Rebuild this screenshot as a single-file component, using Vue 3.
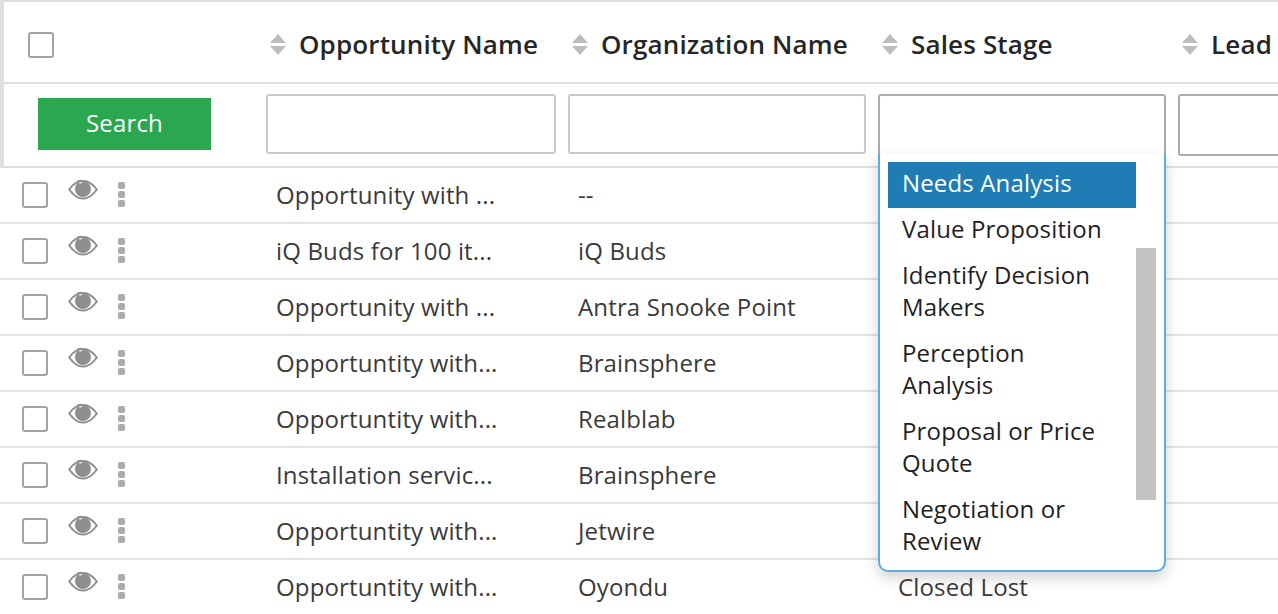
<template>
  <div class="page">
    <div class="head-block">
      <div class="row header-row">
        <div class="select-cell">
          <span class="checkbox"></span>
        </div>
        <div class="head-cell" v-for="col in columns" :key="col">
          <svg class="sort-icon" viewBox="0 0 16 21" width="16" height="21">
            <path d="M8 0 L16 9 H0 Z" />
            <path d="M0 12 H16 L8 21 Z" />
          </svg>
          <span class="head-label">{{ col }}</span>
        </div>
      </div>
      <div class="row filter-row">
        <div class="search-cell">
          <button class="search-btn">Search</button>
        </div>
        <div class="filter-cell"><div class="filter-input"></div></div>
        <div class="filter-cell"><div class="filter-input"></div></div>
        <div class="filter-cell stage-cell">
          <div class="filter-input active"></div>
          <div class="stage-menu">
            <div
              v-for="(opt, i) in stages"
              :key="opt"
              class="stage-option"
              :class="{ selected: i === 0 }"
            >{{ opt }}</div>
            <div class="menu-thumb"></div>
          </div>
        </div>
        <div class="filter-cell"><div class="filter-input tall"></div></div>
      </div>
    </div>
    <div class="row body-row" v-for="item in items" :key="item.name + item.org">
      <div class="action-cell">
        <span class="checkbox small"></span>
        <svg class="eye-icon" viewBox="0 0 30 20" width="30" height="20">
          <path class="eye-outline" d="M1.2 9.5 C5.5 3.4 10 1 15 1 C20 1 24.5 3.4 28.8 9.5 C24.5 15.6 20 18.6 15 18.6 C10 18.6 5.5 15.6 1.2 9.5 Z" />
          <path class="eye-iris" fill-rule="evenodd" d="M15 1 A8 8 0 1 1 14.99 1 Z M12.2 3.6 A2.6 2.6 0 1 0 12.19 3.6 Z" />
        </svg>
        <span class="dots"><i></i><i></i><i></i></span>
      </div>
      <div class="cell">{{ item.name }}</div>
      <div class="cell">{{ item.org }}</div>
      <div class="cell stage-text">{{ item.stage }}</div>
      <div class="cell"></div>
    </div>
  </div>
</template>

<script setup>
const columns = ['Opportunity Name', 'Organization Name', 'Sales Stage', 'Lead']

const stages = [
  'Needs Analysis',
  'Value Proposition',
  'Identify Decision Makers',
  'Perception Analysis',
  'Proposal or Price Quote',
  'Negotiation or Review'
]

const items = [
  { name: 'Opportunity with ...', org: '--', stage: '' },
  { name: 'iQ Buds for 100 it...', org: 'iQ Buds', stage: '' },
  { name: 'Opportunity with ...', org: 'Antra Snooke Point', stage: '' },
  { name: 'Opportuntity with...', org: 'Brainsphere', stage: '' },
  { name: 'Opportuntity with...', org: 'Realblab', stage: '' },
  { name: 'Installation servic...', org: 'Brainsphere', stage: '' },
  { name: 'Opportuntity with...', org: 'Jetwire', stage: '' },
  { name: 'Opportuntity with...', org: 'Oyondu', stage: 'Closed Lost' }
]
</script>

<style>
html, body {
  margin: 0;
  overflow: hidden;
  background: #fff;
}
</style>

<style scoped>
.page {
  width: 1278px;
  height: 614px;
  overflow: hidden;
  font-family: "Open Sans", "Noto Sans", sans-serif;
  color: #2b2b2b;
  border-top: 2px solid #e0e0e0;
  box-sizing: border-box;
  letter-spacing: 0.15px;
}

.head-block {
  border-left: 4px solid #e0e0e0;
}

.row {
  display: grid;
  grid-template-columns: 262px 302px 310px 300px 1fr;
}

.head-block .row {
  grid-template-columns: 258px 302px 310px 300px 1fr;
}

.header-row {
  height: 76px;
  padding-top: 4px;
  border-bottom: 2px solid #e0e0e0;
}

.select-cell {
  display: flex;
  align-items: center;
  padding: 2px 0 0 24px;
}

.head-cell {
  display: flex;
  align-items: center;
  padding-left: 8px;
  gap: 13px;
}

.sort-icon {
  flex: none;
  fill: #bdbdbd;
}

.head-label {
  font-size: 26px;
  font-weight: 600;
  color: #262626;
  white-space: nowrap;
}

.checkbox {
  display: block;
  width: 26px;
  height: 26px;
  box-sizing: border-box;
  border: 2px solid #a3a3a3;
  border-radius: 3px;
  background: #fff;
}

.filter-row {
  height: 82px;
  border-bottom: 2px solid #e0e0e0;
}

.search-cell {
  padding: 14px 0 0 34px;
}

.search-btn {
  display: block;
  width: 173px;
  height: 52px;
  border: 0;
  padding: 0 0 4px;
  background: #2aa74f;
  color: #fff;
  font-family: inherit;
  font-size: 24px;
  letter-spacing: inherit;
}

.filter-cell {
  padding: 10px 0 0 4px;
}

.filter-input {
  width: 290px;
  height: 60px;
  box-sizing: border-box;
  border: 2px solid #c9c9c9;
  border-radius: 3px;
}

.filter-cell:nth-child(3) .filter-input {
  width: 298px;
}

.filter-input.active {
  width: 288px;
  height: 62px;
  border-color: #ababab;
}

.filter-input.tall {
  width: 200px;
  height: 62px;
  border-color: #ababab;
}

.stage-cell {
  position: relative;
}

.stage-menu {
  position: absolute;
  left: 4px;
  top: 70px;
  z-index: 2;
  width: 288px;
  height: 418px;
  box-sizing: border-box;
  padding: 8px 28px 0 8px;
  background: #fff;
  border: 2px solid #5dade2;
  border-top: 0;
  border-radius: 0 0 10px 10px;
  box-shadow: 0 6px 14px rgba(0, 0, 0, 0.18);
}

.stage-option {
  padding: 5px 24px 9px 14px;
  font-size: 24px;
  line-height: 32px;
  color: #1f1f1f;
}

.stage-option.selected {
  background: #207cb5;
  color: #fff;
}

.menu-thumb {
  position: absolute;
  right: 8px;
  top: 94px;
  width: 20px;
  height: 252px;
  background: #c3c3c3;
}

.body-row {
  height: 56px;
  box-sizing: border-box;
  border-bottom: 2px solid #e4e4e4;
}

.action-cell {
  display: flex;
  align-items: flex-start;
  padding: 14px 0 0 22px;
}

.eye-icon {
  flex: none;
  margin: -2px 0 0 20px;
}

.eye-outline {
  fill: #fff;
  stroke: #8f8f8f;
  stroke-width: 2;
}

.eye-iris {
  fill: #8f8f8f;
}

.dots {
  display: flex;
  flex-direction: column;
  gap: 2px;
  margin-left: 20px;
}

.dots i {
  display: block;
  width: 7px;
  height: 7px;
  border-radius: 2px;
  background: #ababab;
}

.cell {
  display: flex;
  align-items: center;
  padding: 0 0 2px 14px;
  font-size: 24px;
  color: #3a3a3a;
  white-space: nowrap;
}

.cell.stage-text {
  padding-left: 24px;
}
</style>
